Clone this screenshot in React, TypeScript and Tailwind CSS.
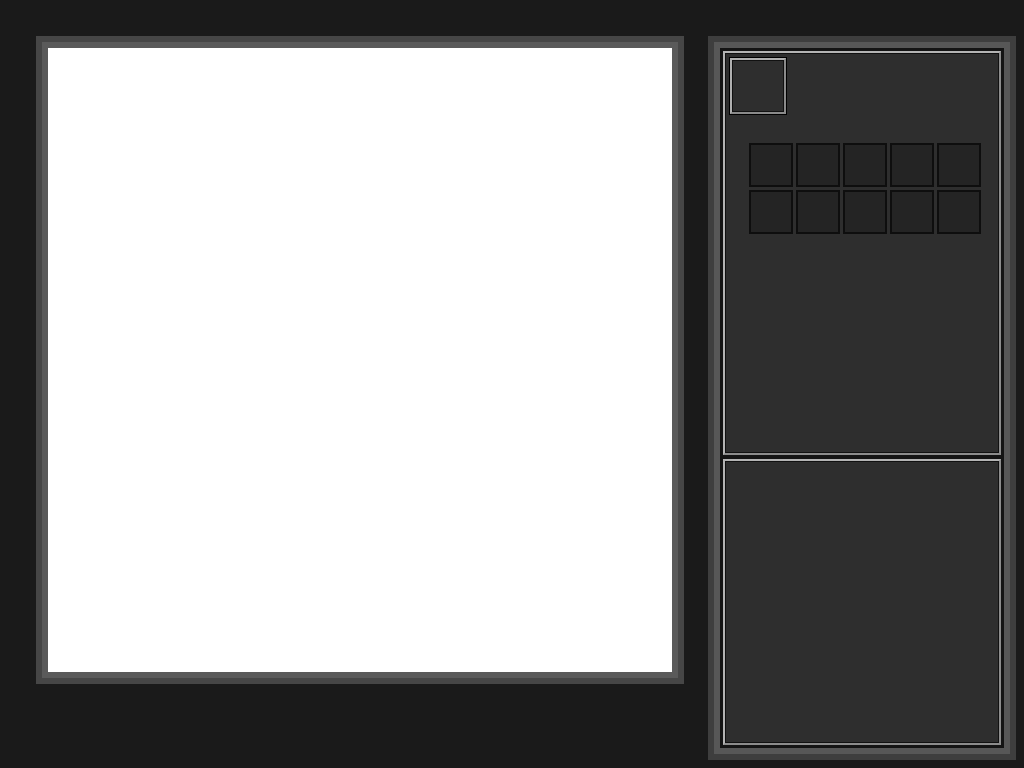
import React from 'react';

function Panel({ className, children }: { className?: string; children?: React.ReactNode }) {
  return (
    <div
      className={`bg-[#2e2e2e] border-2 border-t-[#b4b4b4] border-l-[#b4b4b4] border-r-[#8c8c8c] border-b-[#8c8c8c] shadow-[inset_0_0_0_1px_#111111] ${className ?? ''}`}
    >
      {children}
    </div>
  );
}

export default function App() {
  const slots = Array.from({ length: 10 });

  return (
    <div className="w-[1024px] h-[768px] bg-[#1a1a1a] pt-[36px] pl-[36px] flex items-start gap-[24px]">
      {/* canvas */}
      <div className="w-[648px] h-[648px] bg-[#464646] p-[6px]">
        <div className="h-full bg-[#5a5a5a] p-[6px]">
          <div className="h-full bg-white" />
        </div>
      </div>

      {/* side panel */}
      <div className="w-[308px] h-[724px] bg-[#3e3e3e] p-[6px]">
        <div className="h-full bg-[#575757] p-[6px]">
          <div className="h-full bg-[#141414] p-[3px] flex flex-col gap-[4px]">
            <Panel className="h-[404px] pt-[4px] pl-[4px]">
              <div className="w-[58px] h-[58px] border border-black">
                <div className="w-full h-full bg-[#2e2e2e] border-2 border-t-[#b0b0b0] border-l-[#b0b0b0] border-r-[#8a8a8a] border-b-[#8a8a8a] shadow-[inset_0_0_0_1px_#111111]" />
              </div>
              <div className="mt-[28px] ml-[20px] grid grid-cols-[repeat(5,44px)] gap-[3px]">
                {slots.map((_, i) => (
                  <div key={i} className="w-[44px] h-[44px] bg-[#242424] border-2 border-[#0e0e0e]" />
                ))}
              </div>
            </Panel>
            <Panel className="flex-1" />
          </div>
        </div>
      </div>
    </div>
  );
}
